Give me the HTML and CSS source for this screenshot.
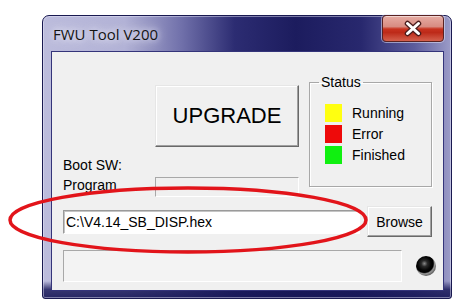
FILE: index.html
```html
<!DOCTYPE html>
<html>
<head>
<meta charset="utf-8">
<title>FWU Tool V200</title>
<link rel="stylesheet" href="styles.css">
</head>
<body>
<div class="window">
  <div class="titlebar">
    <span class="title">FWU Tool V200</span>
    <div class="close">
      <svg width="62" height="27" viewBox="0 0 62 27">
        <path d="M25.5 8.5 L36.5 18.5 M36.5 8.5 L25.5 18.5" stroke="#4a1c1c" stroke-width="5.5" stroke-linecap="round" fill="none"/>
        <path d="M25.5 8.5 L36.5 18.5 M36.5 8.5 L25.5 18.5" stroke="#ffffff" stroke-width="3" stroke-linecap="round" fill="none"/>
      </svg>
    </div>
  </div>
  <div class="client">
    <div class="top">
      <div class="left">
        <button class="btn upgrade">UPGRADE</button>
        <span class="label boot">Boot SW:</span>
        <span class="label prog">Program</span>
        <div class="static prog-field"></div>
      </div>
      <fieldset class="status">
        <legend>Status</legend>
        <div class="item"><span class="sq yellow"></span>Running</div>
        <div class="item"><span class="sq red"></span>Error</div>
        <div class="item"><span class="sq green"></span>Finished</div>
      </fieldset>
    </div>
    <div class="path-row">
      <div class="textbox">C:\V4.14_SB_DISP.hex</div>
      <button class="btn browse">Browse</button>
    </div>
    <div class="bottom-row">
      <div class="static progress"></div>
      <span class="led"></span>
    </div>
  </div>
</div>
<svg class="annot" width="468" height="303" viewBox="0 0 468 303">
  <ellipse cx="188" cy="220" rx="178" ry="32" fill="none" stroke="#e2141a" stroke-width="3.5"/>
</svg>
</body>
</html>
```

FILE: styles.css
```css
html, body {
  margin: 0;
  padding: 0;
  background: #ffffff;
}
body {
  position: relative;
  width: 468px;
  height: 303px;
  overflow: hidden;
  font-family: "Liberation Sans", Arial, sans-serif;
  font-size: 14px;
  color: #000;
}
.window {
  box-sizing: border-box;
  width: 410px;
  height: 284px;
  margin: 15px 0 0 42px;
  border: 1px solid #191950;
  border-radius: 7px 7px 3px 3px;
  padding: 0 7px 7px 8px;
  display: flex;
  flex-direction: column;
  background:
    linear-gradient(180deg, rgba(22,22,86,0) 0, rgba(22,22,86,0) 94%, rgba(22,22,86,.8) 97%, rgba(22,22,86,.9) 100%),
    linear-gradient(90deg, #bcbcdc 0%, #b2b2d6 20%, #7070aa 34%, #2c2c72 47%, #1c1c5e 62%, #28286e 78%, #5c5c9c 91%, #9c9cc8 100%);
  box-shadow: inset 0 0 0 1px rgba(235,235,252,.45);
}
.titlebar {
  height: 35px;
  display: flex;
  justify-content: space-between;
  align-items: center;
  flex: none;
}
.title {
  margin-left: 2px;
  font-family: "Open Sans", "Liberation Sans", sans-serif;
  font-size: 15px;
  color: #141414;
  text-shadow: 0 0 6px #f2f2fa, 0 0 12px #e4e4f2;
}
.close {
  align-self: flex-start;
  margin-top: -1px;
  box-sizing: border-box;
  width: 62px;
  height: 27px;
  border: 1px solid #5a2222;
  border-radius: 4px;
  background: linear-gradient(180deg, #e6aca4 0%, #d88c82 42%, #c8321f 52%, #bd2a19 66%, #d4604d 100%);
  box-shadow: 0 0 0 1px rgba(225,225,245,.55), inset 0 1px 0 rgba(255,255,255,.5);
}
.close svg {
  display: block;
  margin: -1px 0 0 -1px;
}
.client {
  flex: 1;
  box-sizing: border-box;
  border: 1px solid #34347a;
  background: #f0f0f0;
  padding: 22px 0 0 11px;
  display: flex;
  flex-direction: column;
}
.top {
  display: flex;
  align-items: flex-start;
}
.left {
  margin-top: 11px;
  display: grid;
  grid-template-columns: 92px 144px;
  grid-template-rows: 70px 20px 22px;
}
.btn {
  box-sizing: border-box;
  font-family: "Liberation Sans", Arial, sans-serif;
  color: #000;
  background: #f0f0f0;
  padding: 0;
  border-style: solid;
  border-width: 1px;
  border-color: #e6e6e6 #696969 #696969 #e6e6e6;
  box-shadow: inset -1px -1px 0 #a0a0a0, inset 1px 1px 0 #ffffff;
  border-radius: 0;
}
.upgrade {
  grid-column: 2;
  grid-row: 1;
  align-self: start;
  height: 62px;
  font-size: 22px;
}
.label {
  grid-column: 1;
  line-height: 20px;
  white-space: nowrap;
}
.boot { grid-row: 2; }
.prog { grid-row: 3; }
.static {
  box-sizing: border-box;
  border-style: solid;
  border-width: 1px;
  border-color: #a8a8a8 #ffffff #ffffff #a8a8a8;
  background: #f0f0f0;
}
.prog-field {
  grid-column: 2;
  grid-row: 3;
  margin-top: 2px;
  height: 20px;
}
.status {
  box-sizing: border-box;
  margin: 0 0 0 10px;
  width: 123px;
  height: 113px;
  padding: 12px 0 0 9px;
  border: 1px solid #a8a8a8;
  box-shadow: inset 1px 1px 0 #ffffff, 1px 1px 0 #ffffff;
}
.status legend {
  padding: 0 2px;
  font-size: 14px;
  line-height: 16px;
}
.item {
  display: flex;
  align-items: center;
  height: 21px;
  padding-left: 6px;
  gap: 10px;
  line-height: 18px;
}
.sq {
  width: 17px;
  height: 18px;
  flex: none;
}
.yellow { background: #ffff10; }
.red { background: #ee0a0a; }
.green { background: #10f010; }
.path-row {
  margin-top: 9px;
  display: flex;
  align-items: center;
  gap: 7px;
  height: 31px;
}
.textbox {
  box-sizing: border-box;
  width: 297px;
  height: 24px;
  background: #ffffff;
  border-style: solid;
  border-width: 1px;
  border-color: #9a9a9a #ffffff #ffffff #9a9a9a;
  box-shadow: inset 1px 1px 0 #c4c4c4;
  padding-left: 2px;
  line-height: 22px;
  white-space: nowrap;
}
.browse {
  width: 65px;
  height: 31px;
  font-size: 14px;
}
.bottom-row {
  margin-top: 13px;
  display: flex;
  align-items: center;
}
.progress {
  width: 339px;
  height: 32px;
  background: #f3f3f3;
}
.led {
  margin-left: 14px;
  width: 20px;
  height: 20px;
  border-radius: 50%;
  background: radial-gradient(circle at 42% 38%, #8a8a8a 0, #2a2a2a 18%, #050505 40%, #000 52%, #9a9a9a 60%, #5a5a5a 74%, #1a1a1a 100%);
}
.annot {
  position: absolute;
  left: 0;
  top: 0;
  pointer-events: none;
}
```
